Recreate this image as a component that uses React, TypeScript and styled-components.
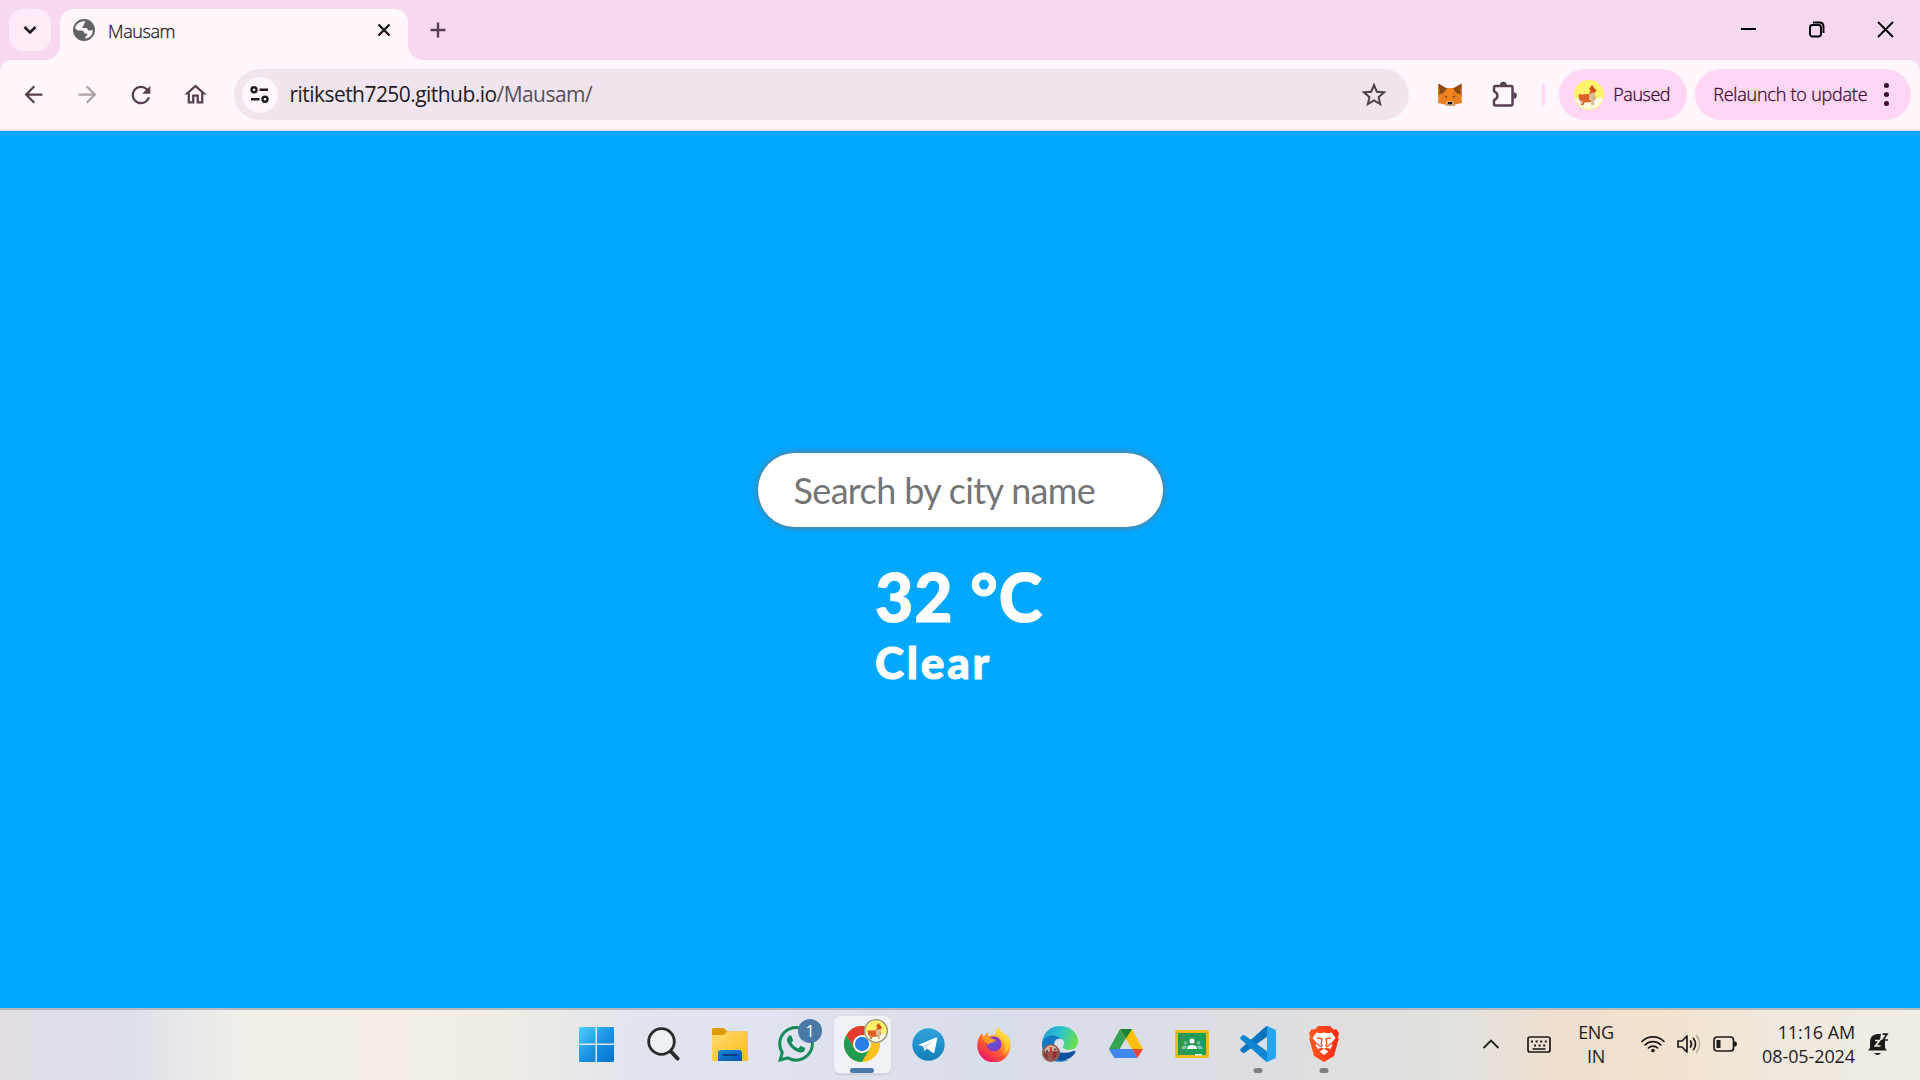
import React from "react";
import styled, { createGlobalStyle } from "styled-components";
import { MdArrowBack, MdArrowForward, MdRefresh, MdOutlineHome, MdStarBorder } from "react-icons/md";
import { SiWhatsapp } from "react-icons/si";

const ui = `"Open Sans", "Noto Sans", sans-serif`;
const humanist = `Lato, "Open Sans", sans-serif`;

const GlobalStyle = createGlobalStyle`
  * { box-sizing: border-box; }
  body { margin: 0; overflow: hidden; font-family: ${ui}; }
  svg { display: block; flex: none; }
`;

const Screen = styled.div`
  width: 1920px;
  height: 1080px;
  display: flex;
  flex-direction: column;
  background: #f7d9ef;
`;

const Label = styled.span<{ $size: number; $spacing?: number; $color?: string; $light?: boolean }>`
  font-size: ${(p) => p.$size}px;
  font-weight: ${(p) => (p.$light ? 300 : 400)};
  -webkit-text-stroke: ${(p) => (p.$light ? "0.3px currentColor" : "0")};
  letter-spacing: ${(p) => p.$spacing ?? 0}px;
  color: ${(p) => p.$color ?? "#1f1a1f"};
  white-space: nowrap;
`;

const TabStrip = styled.header`
  height: 60px;
  flex: none;
  display: flex;
  padding: 9px 0 0 9px;
`;

const TabSearch = styled.button`
  width: 42px;
  height: 42px;
  padding: 0;
  border: 0;
  border-radius: 14px;
  background: #ffebf8;
  display: grid;
  place-items: center;
`;

const Tab = styled.div`
  position: relative;
  width: 348px;
  height: 51px;
  margin-left: 9px;
  padding: 0 16px 9px 13px;
  border-radius: 14px 14px 0 0;
  background: #fff7fb;
  display: flex;
  align-items: center;
  &::before, &::after {
    content: "";
    position: absolute;
    bottom: 0;
    width: 15px;
    height: 15px;
  }
  &::before {
    left: -15px;
    background: radial-gradient(circle at 0 0, transparent 14.5px, #fff7fb 15.5px);
  }
  &::after {
    right: -15px;
    background: radial-gradient(circle at 100% 0, transparent 14.5px, #fff7fb 15.5px);
  }
`;

const TabTitle = styled(Label)`
  flex: 1;
  margin: 2px 0 0 13px;
`;

const NewTab = styled.div`
  margin: 13px 0 0 22px;
`;

const WindowControls = styled.div`
  margin-left: auto;
  display: flex;
  gap: 52px;
  padding: 12px 26px 0 0;
`;

const Toolbar = styled.nav`
  height: 71px;
  flex: none;
  display: flex;
  align-items: center;
  padding: 0 9px 0 20px;
  border-radius: 12px 12px 0 0;
  border-bottom: 2px solid #ecdbe8;
  background: #fff7fb;
  color: #574052;
`;

const NavButtons = styled.div`
  display: flex;
  gap: 26.5px;
`;

const Omnibox = styled.div`
  width: 1177px;
  height: 51px;
  margin-left: 25px;
  padding: 0 20px 0 8px;
  border-radius: 26px;
  background: #f0e5ee;
  display: flex;
  align-items: center;
`;

const SiteInfo = styled.div`
  width: 36px;
  height: 36px;
  border-radius: 50%;
  background: #fff7fb;
  display: grid;
  place-items: center;
`;

const Url = styled.div`
  flex: 1;
  margin: 0 0 1px 12px;
  display: flex;
`;

const Extensions = styled.div`
  display: flex;
  align-items: center;
  gap: 30px;
  margin-left: 29px;
`;

const Divider = styled.div`
  width: 3px;
  height: 23px;
  margin-left: 24px;
  border-radius: 2px;
  background: #ffd6f3;
`;

const Pill = styled.div<{ $width: number; $left: number; $padLeft: number }>`
  width: ${(p) => p.$width}px;
  height: 51px;
  margin-left: ${(p) => p.$left}px;
  padding-left: ${(p) => p.$padLeft}px;
  border-radius: 26px;
  background: #ffd6f3;
  display: flex;
  align-items: center;
  gap: 9px;
  span { margin-bottom: 1px; }
`;

const MenuDots = styled.div`
  display: grid;
  gap: 4px;
  margin-left: 8px;
  i {
    width: 5px;
    height: 5px;
    border-radius: 50%;
    background: #370b35;
  }
`;

const Page = styled.main`
  height: 877px;
  flex: none;
  padding-top: 322px;
  background: #00a8ff;
  display: flex;
  flex-direction: column;
  align-items: center;
  font-family: ${humanist};
`;

const SearchInput = styled.input`
  width: 405px;
  height: 74px;
  padding: 0 35px 0 36px;
  border: 0;
  border-radius: 37px;
  outline: 0;
  background: #fff;
  box-shadow: 0 0 6px 0.5px #757575;
  font: 400 36px ${humanist};
  letter-spacing: -0.65px;
  &::placeholder { color: #757575; opacity: 1; }
`;

const Reading = styled.section`
  width: 170px;
  margin-top: 30px;
  color: #fff;
  -webkit-text-stroke: 1px #fff;
`;

const Temperature = styled.h1`
  margin: 0;
  font-size: 66px;
  font-weight: 900;
  line-height: 79px;
  letter-spacing: 1px;
  white-space: nowrap;
`;

const Condition = styled.h2`
  margin: 0;
  font-size: 44px;
  font-weight: 900;
  line-height: 52px;
  letter-spacing: 2.8px;
`;

const Taskbar = styled.footer`
  flex: 1;
  display: grid;
  grid-template-columns: 1fr 792px 1fr;
  border-top: 2px solid #b5b8bd;
  background: linear-gradient(90deg, #e2dee4 0, #dedde8 70px, #dddfe9 130px, #e8e9ea 190px, #f2efe9 250px,
    #f4eee7 380px, #f0ede6 500px, #e9e9e8 560px, #dfe3ee 660px, #dfe4f0 750px, #dde1ec 860px, #d8ddea 1000px,
    #dadde6 1160px, #dfdfde 1350px, #e2e1de 1460px, #efdfcf 1560px, #f2e1cd 1660px, #f0e8dc 1760px, #f0ede7 1920px);
`;

const Apps = styled.div`
  grid-column: 2;
  display: grid;
  grid-template-columns: 65px 68px repeat(10, 66px);
`;

const AppCell = styled.div`
  height: 70px;
  display: grid;
  place-items: center;
  padding-bottom: 2px;
  position: relative;
`;

const ActiveTile = styled.div`
  width: 57px;
  height: 57px;
  border-radius: 6px;
  background: #f1f2f7;
  box-shadow: 0 0 0 1px #d9dce4, 0 2px 1px #c6c9d2;
  display: grid;
  place-items: center;
`;

const Indicator = styled.span<{ $active?: boolean }>`
  position: absolute;
  left: 50%;
  top: 58px;
  width: ${(p) => (p.$active ? 24 : 9)}px;
  height: 5px;
  border-radius: 3px;
  transform: translateX(-50%);
  background: ${(p) => (p.$active ? "#4a7aa8" : "#808083")};
`;

const Count = styled.span`
  position: absolute;
  left: 35px;
  top: 9px;
  width: 24px;
  height: 24px;
  border-radius: 50%;
  background: #4a79a6;
  color: #fff;
  font-size: 16px;
  line-height: 24px;
  text-align: center;
`;

const AvatarBadge = styled.span`
  position: absolute;
  left: 35px;
  top: 9px;
`;

const Tray = styled.div`
  display: flex;
  height: 68px;
  align-items: center;
  padding-left: 127px;
`;

const Stack = styled.div<{ $width: number; $left: number; $align: string }>`
  width: ${(p) => p.$width}px;
  margin-left: ${(p) => p.$left}px;
  display: flex;
  flex-direction: column;
  align-items: ${(p) => p.$align};
  line-height: 24px;
`;

const TrayIcons = styled.div`
  display: flex;
  align-items: center;
  gap: 12px;
  margin-left: 25px;
`;

const Globe = () => (
  <svg width="22" height="22" viewBox="0 0 22 22">
    <circle cx="11" cy="11" r="11" fill="#5f6368" />
    <path d="M2 9.500Q3 3.500 10 2.200q3-.3 2.500 1-2 .5-1.800 3.200Q9 7 9.500 9h3.500q2 0 2 2.500h2.500l2.300-.8Q20 18 12.500 19.800v-2.500q2-.3 2-2.800h-3q-.5-3-3-3H5z" fill="#fff7fb" />
  </svg>
);

const Corgi = ({ size, ring }: { size: number; ring?: boolean }) => (
  <svg width={size} height={size} viewBox="0 0 30 30">
    <circle cx="15" cy="15" r="15" fill="#fff36a" />
    <path d="M0.500 18h29a15 15 0 0 1-29 0z" fill="#fdfae2" />
    <path d="M4.500 14l2.500.5 8-.5 1.500-4-1.500-1.500L16.500 7l1.500-2 1.500 2 3 3.500L20.500 13l1 5-2 4h-3l-6 .5-1 2.500H7v-2L5 19z" fill="#dc6027" />
    <path d="M15 14l5-1.500 1.500 2.500-1.500 5v5h-3v-4l-2-1.500zM6 20l3 1-.5 3H7z" fill="#d9bb98" />
    <path d="M18 5l1.500 3.500 3 2-2 1.500-4-1.500z" fill="#d2491c" />
    {ring && <circle cx="15" cy="15" r="14.200" fill="none" stroke="#8f9289" strokeWidth="1.600" />}
  </svg>
);

const Fox = () => (
  <svg width="24" height="23" viewBox="0 0 24 23">
    <path d="M0 1l8 4h8l8-4v12l-.5 2 .5 5-6.500 1.500-2 1.500H9l-2-1.500L0 20l.5-5L0 13z" fill="#e87f24" />
    <path d="M.5.500L9 5.500 5.500 10 1 11.500 1.500 7zM23.500.5L15 5.500l3.500 4.500 4.500 1.500-.5-4.500z" fill="#8f4a1b" />
    <path d="M9 5h6l-.5 9 1.500 5H8l1.500-5z" fill="#f6851b" />
    <path d="M6.500 12.500l2.800 1.300-.8 1.200zM17.500 12.500l-2.800 1.300.8 1.200z" fill="#3d3342" />
    <path d="M8 19.500l2-1h4l2 1-1 3H9z" fill="#cfc2b2" />
    <path d="M9.800 19h4.400v2.300H9.800z" fill="#15151c" />
  </svg>
);

const Puzzle = () => (
  <svg width="26" height="27" viewBox="0 0 26 27" fill="none">
    <path d="M3.500 5h15.500q1.500 0 1.500 1.500v16.500q0 1.500-1.500 1.500H3.500Q2 24.500 2 23v-3.800c4.600-2.200 4.600-6.700 0-9V6.500Q2 5 3.500 5z" stroke="#574052" strokeWidth="2.500" strokeLinejoin="round" />
    <path d="M8 4a3.300 3.300 0 0 1 6.600 0zM21.500 11.300a3.300 3.300 0 0 1 0 6.600z" fill="#574052" />
  </svg>
);

const Windows = () => (
  <svg width="35" height="35" viewBox="0 0 35 35">
    <defs>
      <linearGradient id="win" x1="0" y1="0" x2="35" y2="35" gradientUnits="userSpaceOnUse">
        <stop stopColor="#4fd2fb" /><stop offset=".5" stopColor="#1a94e4" /><stop offset="1" stopColor="#0672cf" />
      </linearGradient>
    </defs>
    <path d="M1 0h15.500v16.500H0V1zM18 0h16l1 1v15.500H18zM0 18h16.500v17H1l-1-1zM18 18h17v16l-1 1H18z" fill="url(#win)" />
  </svg>
);

const Search = () => (
  <svg width="33" height="34" viewBox="0 0 33 34" fill="none" stroke="#2b2b2d">
    <circle cx="14.500" cy="14.500" r="12.800" strokeWidth="2.800" fill="#edf0f4" />
    <path d="M24 24.500l6.500 7" strokeWidth="4" strokeLinecap="round" />
  </svg>
);

const Folder = () => (
  <svg width="36" height="33" viewBox="0 0 36 33">
    <defs>
      <linearGradient id="fold" x1="0" y1="0" x2="1" y2="1"><stop stopColor="#ffdb70" /><stop offset="1" stopColor="#fcbd1b" /></linearGradient>
      <linearGradient id="foldb" x1="0" y1="0" x2="1" y2="1"><stop stopColor="#1687d9" /><stop offset="1" stopColor="#0559a9" /></linearGradient>
    </defs>
    <path d="M0 8V1.500Q0 0 1.500 0h9q1.500 0 2.500 1l2.500 2.500H35L36 5v6H0z" fill="#dd9b0b" />
    <path d="M0 7h10q2 0 3-1l2-2.500h20l1 1V32l-1 1H1l-1-1z" fill="url(#fold)" />
    <path d="M6 33v-8q0-3 3-3h18q3 0 3 3v8z" fill="url(#foldb)" />
    <path d="M11 27h14" stroke="#063e79" strokeWidth="1.800" strokeLinecap="round" />
  </svg>
);

const Chrome = () => (
  <svg width="36" height="36" viewBox="0 0 36 36">
    <circle cx="18" cy="18" r="18" fill="#fcc31e" />
    <path d="M2.410 9A18 18 0 0 1 33.590 9H18l-7.800 13.500z" fill="#e33b2e" />
    <path d="M2.410 9L10.200 22.500A9 9 0 0 0 18 27l7.800-4.500L18 36A18 18 0 0 1 2.410 9z" fill="#219b50" />
    <circle cx="18" cy="18" r="9" fill="#fff" />
    <circle cx="18" cy="18" r="7.200" fill="#2b7de9" />
  </svg>
);

const Telegram = () => (
  <svg width="33" height="33" viewBox="0 0 33 33">
    <defs><linearGradient id="tg" x1="0" y1="0" x2="0" y2="1"><stop stopColor="#31a3dc" /><stop offset="1" stopColor="#127fb9" /></linearGradient></defs>
    <circle cx="16.500" cy="16.500" r="16.200" fill="url(#tg)" />
    <path d="M6 17L24 9.500q1.500-.4 1.200 1.300L22.500 24q-.4 1.600-1.800.8L15 20.500 12.500 23l-1.700-5z" fill="#fff" />
    <path d="M11.500 18.500l9.500-6-7.500 7.500-.9 3z" fill="#c3dcea" />
  </svg>
);

const Firefox = () => (
  <svg width="34" height="35" viewBox="0 0 34 35">
    <defs>
      <linearGradient id="ff" x1=".85" y1=".1" x2=".25" y2=".95"><stop stopColor="#fff04a" /><stop offset=".35" stopColor="#ffa52a" /><stop offset=".65" stopColor="#ff542f" /><stop offset="1" stopColor="#e8176f" /></linearGradient>
      <radialGradient id="ffp"><stop stopColor="#5a55d8" /><stop offset="1" stopColor="#9137c4" /></radialGradient>
    </defs>
    <path d="M5 6l1 4 3-3q1-1 2-2v4l7-1q1-6 4-8 1 4 4 6l2 2 1-1q5 5 4.500 12A16.500 16.500 0 0 1 .3 19Q0 12 5 6z" fill="url(#ff)" />
    <path d="M22 0q-4 5-2 9 6 1 8 7t-2 11q7-3 7-13l-4-6q-6-3-7-8z" fill="#ffd83d" opacity=".75" />
    <circle cx="17" cy="17" r="7.600" fill="url(#ffp)" />
    <path d="M4 11q6-3 9 0l6 2q-2 3-6 3l-2 2-2-3z" fill="#ff9b22" />
  </svg>
);

const Edge = () => (
  <svg width="36" height="36" viewBox="0 0 36 36">
    <defs>
      <linearGradient id="ed" x1="0" y1=".2" x2="1" y2=".5"><stop stopColor="#2098d8" /><stop offset=".5" stopColor="#2cc3ce" /><stop offset="1" stopColor="#69e04c" /></linearGradient>
    </defs>
    <path d="M0 17C1 6 9 0 18 0s18 6 18 15c0 6-4 9-9 9-4 0-7-1-6-4 3-2 1-7-4-8S4 11 0 17z" fill="url(#ed)" />
    <path d="M0 17C3 9 13 7 19 13c-5-1-7 2-7 7 0 8 7 13 14 14-14 6-27-4-26-17z" fill="#1479c4" />
    <path d="M12 20c0 6 8 9 20 5 1.500-.5 2 .5 1 2-6 9-19 10-22 1-1.500-4 .5-6.500 1-8z" fill="#10509e" />
    <path d="M14 18q1-4 4-4 4 0 4 4-2 2-1 4 3 3 9 2-12 4-16-6z" fill="#dbe0eb" />
    <circle cx="9" cy="27" r="9" fill="#8d5a4c" />
    <path d="M2 24l4-4 3-1 5 2 1 4-3 1-3-2-4 3z" fill="#d3b39c" />
    <path d="M1.500 29l3.500-2 1 6zM11 25l4 1-1 5-3 2z" fill="#8a2f3a" />
    <path d="M7.500 21h2l.8 4-1.800 2zM8 29l2-1 .5 5z" fill="#e02f40" />
    <path d="M5 24v3M13 22.500v2" stroke="#3c3c42" strokeWidth="1.600" />
  </svg>
);

const Drive = () => (
  <svg width="34" height="30" viewBox="0 0 34 30">
    <path d="M11 0L0 20l5.500 9L17 9z" fill="#34a250" />
    <path d="M11 0h12l11 20H23z" fill="#fcc10c" />
    <path d="M11 0h12l-6 9.500z" fill="#198038" />
    <path d="M34 20H23l5.500 9z" fill="#e84436" />
    <path d="M11 20h12l5.500 9h-23L0 20z" fill="#4285f4" />
  </svg>
);

const Classroom = () => (
  <svg width="34" height="28" viewBox="0 0 34 28">
    <rect width="34" height="28" rx="2" fill="#f5b916" />
    <path d="M3 3h28v22H3z" fill="#219c59" />
    <circle cx="17" cy="11" r="2.500" fill="#fff" />
    <path d="M12 19q0-4 5-4t5 4z" fill="#fff" />
    <path d="M6.500 19q0-4 5-3l-1 3zM27.500 19q0-4-5-3l1 3z" fill="#8bcbab" />
    <circle cx="10.500" cy="13" r="1.800" fill="#78c19c" />
    <circle cx="23.500" cy="13" r="1.800" fill="#78c19c" />
    <path d="M20 24h7v1.500h-7z" fill="#fff" />
  </svg>
);

const VSCode = () => (
  <svg width="36" height="36" viewBox="0 0 36 36">
    <path d="M1 22.500L25.500.7 28 0v10L5 26.500q-1.400 1-2.600 0L.8 25q-1.400-1.200.2-2.500z" fill="#0874be" />
    <path d="M1 13.500L25.500 35.300l2.500.7V26L5 9.500q-1.400-1-2.600 0L.8 11q-1.400 1.200.2 2.500z" fill="#0f87d2" />
    <path d="M26.500.2Q27 0 28 .3l7 3.200q1 .5 1 1.500v26q0 1-1 1.500l-7 3.200q-1 .3-1.500.1.500-.8.500-2V2.200q0-1.200-.5-2z" fill="#28a4f2" />
  </svg>
);

const Brave = () => (
  <svg width="30" height="36" viewBox="0 0 30 36">
    <defs><linearGradient id="br"><stop stopColor="#ff5a1f" /><stop offset="1" stopColor="#fb2a16" /></linearGradient></defs>
    <path d="M9 0h12l3.500 3.500 3-.2L30 7l-1 4 .7 2-4.700 17-10 6-10-6L.3 13 1 11 0 7l2.500-3.700 3 .2z" fill="url(#br)" />
    <path d="M7.500 6.500l4 .8L15 6.500l3.500.8 4-.8 4 5.500-4 5 .8 2.500-2 3.500-4.300-1.500-2 1.500-2-1.500L8.700 23l-2-3.500.8-2.500-4-5z" fill="#fff" />
    <path d="M8 12l5 .8-.8 4.700 1 2.500M22 12l-5 .8.800 4.700-1 2.500M7.500 17l2.500 2.500 3 1.500M22.500 17L20 19.500 17 21" fill="none" stroke="#fb4b1c" strokeWidth="1.300" />
    <path d="M10.500 25.500L15 23l4.500 2.500L15 29z" fill="#fff" />
  </svg>
);

const Wifi = () => (
  <svg width="24" height="18" viewBox="0 0 24 18" fill="none" stroke="#1d1b1a" strokeWidth="1.700" strokeLinecap="round">
    <path d="M1 6.500a15.500 15.500 0 0 1 22 0M4.200 9.800a11 11 0 0 1 15.600 0M7.400 13a6.500 6.500 0 0 1 9.200 0" />
    <circle cx="12" cy="15.500" r="1" />
  </svg>
);

const Speaker = () => (
  <svg width="24" height="20" viewBox="0 0 24 20" fill="none" stroke="#1d1b1a" strokeWidth="1.700" strokeLinecap="round" strokeLinejoin="round">
    <path d="M1 7h4l5-5v16l-5-5H1z" />
    <path d="M13.500 7q2 3 0 6M16.500 4.500q4 5.500 0 11" />
    <path d="M19.500 1.500q6.500 8.500 0 17" stroke="#aea59a" strokeWidth="1.300" />
  </svg>
);

const Battery = () => (
  <svg width="24" height="16" viewBox="0 0 24 16">
    <rect x="1" y="1" width="19.500" height="14" rx="3" fill="none" stroke="#1d1b1a" strokeWidth="1.700" />
    <path d="M3.500 4h4v8h-4zM21 5.500h1.500Q24 6 24 8t-1.500 2.500H21z" fill="#1d1b1a" />
  </svg>
);

const Keyboard = () => (
  <svg width="24" height="17" viewBox="0 0 24 17" fill="none" stroke="#1d1b1a">
    <rect x="1" y="1" width="22" height="15" rx="2" strokeWidth="1.700" />
    <path d="M4 5.500h16M7 9.500h12" strokeWidth="2" strokeDasharray="2 2.600" />
    <path d="M5.500 13h13" strokeWidth="1.600" />
  </svg>
);

const Bell = () => (
  <svg width="21" height="23" viewBox="0 0 21 23">
    <path d="M2 15V9q0-7 7-8h4l-1 6h5v8l2 2.500H0z" fill="#1d1b1a" />
    <path d="M6 20h7q-3.500 4-7 0z" fill="#1d1b1a" />
    <path d="M7 7.500h4.500L7.500 13h5" fill="none" stroke="#f1e9de" strokeWidth="1.700" />
    <path d="M14.500 1.200h4.500L15 7h5" fill="none" stroke="#1d1b1a" strokeWidth="1.700" />
  </svg>
);

export default function App() {
  return (
    <Screen>
      <GlobalStyle />
      <TabStrip>
        <TabSearch>
          <svg width="14" height="10" viewBox="0 0 14 10" fill="none" stroke="#1d1b20" strokeWidth="2.600"><path d="M1.500 2L7 7.500 12.500 2" /></svg>
        </TabSearch>
        <Tab>
          <Globe />
          <TabTitle $size={18} $spacing={-0.4} $light>Mausam</TabTitle>
          <svg width="16" height="16" viewBox="0 0 16 16" stroke="#1f1a1f" strokeWidth="2.400"><path d="M2.500 2.500l11 11M13.500 2.500l-11 11" /></svg>
        </Tab>
        <NewTab>
          <svg width="16" height="16" viewBox="0 0 16 16" stroke="#574052" strokeWidth="2.400"><path d="M8 .5v15M.5 8h15" /></svg>
        </NewTab>
        <WindowControls>
          <svg width="17" height="17" viewBox="0 0 17 17" stroke="#000" strokeWidth="2"><path d="M1 8h15" /></svg>
          <svg width="16" height="17" viewBox="0 0 16 17" fill="none" stroke="#000" strokeWidth="1.900"><rect x="1" y="4" width="11" height="11.500" rx="2.500" /><path d="M4 1.500h6.500q4 0 4 4V12" /></svg>
          <svg width="17" height="17" viewBox="0 0 17 17" stroke="#000" strokeWidth="1.800"><path d="M1 1l15 15M16 1L1 16" /></svg>
        </WindowControls>
      </TabStrip>
      <Toolbar>
        <NavButtons>
          <MdArrowBack size={27} />
          <MdArrowForward size={27} color="#aaa3a8" />
          <MdRefresh size={28} />
          <MdOutlineHome size={27} />
        </NavButtons>
        <Omnibox>
          <SiteInfo>
            <svg width="19" height="17" viewBox="0 0 19 17" fill="none" stroke="#1f1a1f" strokeWidth="2.400">
              <circle cx="4" cy="3.800" r="2.500" /><path d="M9.500 3.800H18M1 13.200h8.500" /><circle cx="15" cy="13.200" r="2.500" />
            </svg>
          </SiteInfo>
          <Url>
            <Label $size={21} $spacing={-0.55}>ritikseth7250.github.io</Label>
            <Label $size={21} $spacing={-0.55} $color="#5a4e57">/Mausam/</Label>
          </Url>
          <MdStarBorder size={30} color="#4b444a" />
        </Omnibox>
        <Extensions><Fox /><Puzzle /></Extensions>
        <Divider />
        <Pill $width={128} $left={14} $padLeft={15}>
          <Corgi size={30} />
          <Label $size={18} $spacing={-0.5} $color="#370b35" $light>Paused</Label>
        </Pill>
        <Pill $width={216} $left={8} $padLeft={18}>
          <Label $size={18} $spacing={-0.22} $color="#370b35" $light>Relaunch to update</Label>
          <MenuDots><i /><i /><i /></MenuDots>
        </Pill>
      </Toolbar>
      <Page>
        <SearchInput placeholder="Search by city name" />
        <Reading>
          <Temperature>32 °C</Temperature>
          <Condition>Clear</Condition>
        </Reading>
      </Page>
      <Taskbar>
        <Apps>
          <AppCell><Windows /></AppCell>
          <AppCell><Search /></AppCell>
          <AppCell><Folder /></AppCell>
          <AppCell><SiWhatsapp size={36} color="#168a57" /><Count>1</Count></AppCell>
          <AppCell><ActiveTile><Chrome /></ActiveTile><AvatarBadge><Corgi size={24} ring /></AvatarBadge><Indicator $active /></AppCell>
          <AppCell><Telegram /></AppCell>
          <AppCell><Firefox /></AppCell>
          <AppCell><Edge /></AppCell>
          <AppCell><Drive /></AppCell>
          <AppCell><Classroom /></AppCell>
          <AppCell><VSCode /><Indicator /></AppCell>
          <AppCell><Brave /><Indicator /></AppCell>
        </Apps>
        <Tray>
          <svg width="16" height="10" viewBox="0 0 16 10" fill="none" stroke="#1d1b1a" strokeWidth="1.800"><path d="M.5 9L8 1.500 15.500 9" /></svg>
          <Stack $width={24} $left={28} $align="center"><Keyboard /></Stack>
          <Stack $width={40} $left={25} $align="center">
            <Label $size={18} $spacing={-0.4}>ENG</Label>
            <Label $size={18} $spacing={-0.4}>IN</Label>
          </Stack>
          <TrayIcons><Wifi /><Speaker /><Battery /></TrayIcons>
          <Stack $width={100} $left={18} $align="flex-end">
            <Label $size={18} $spacing={-0.1}>11:16 AM</Label>
            <Label $size={18} $spacing={-0.1}>08-05-2024</Label>
          </Stack>
          <Stack $width={21} $left={13} $align="center"><Bell /></Stack>
        </Tray>
      </Taskbar>
    </Screen>
  );
}
